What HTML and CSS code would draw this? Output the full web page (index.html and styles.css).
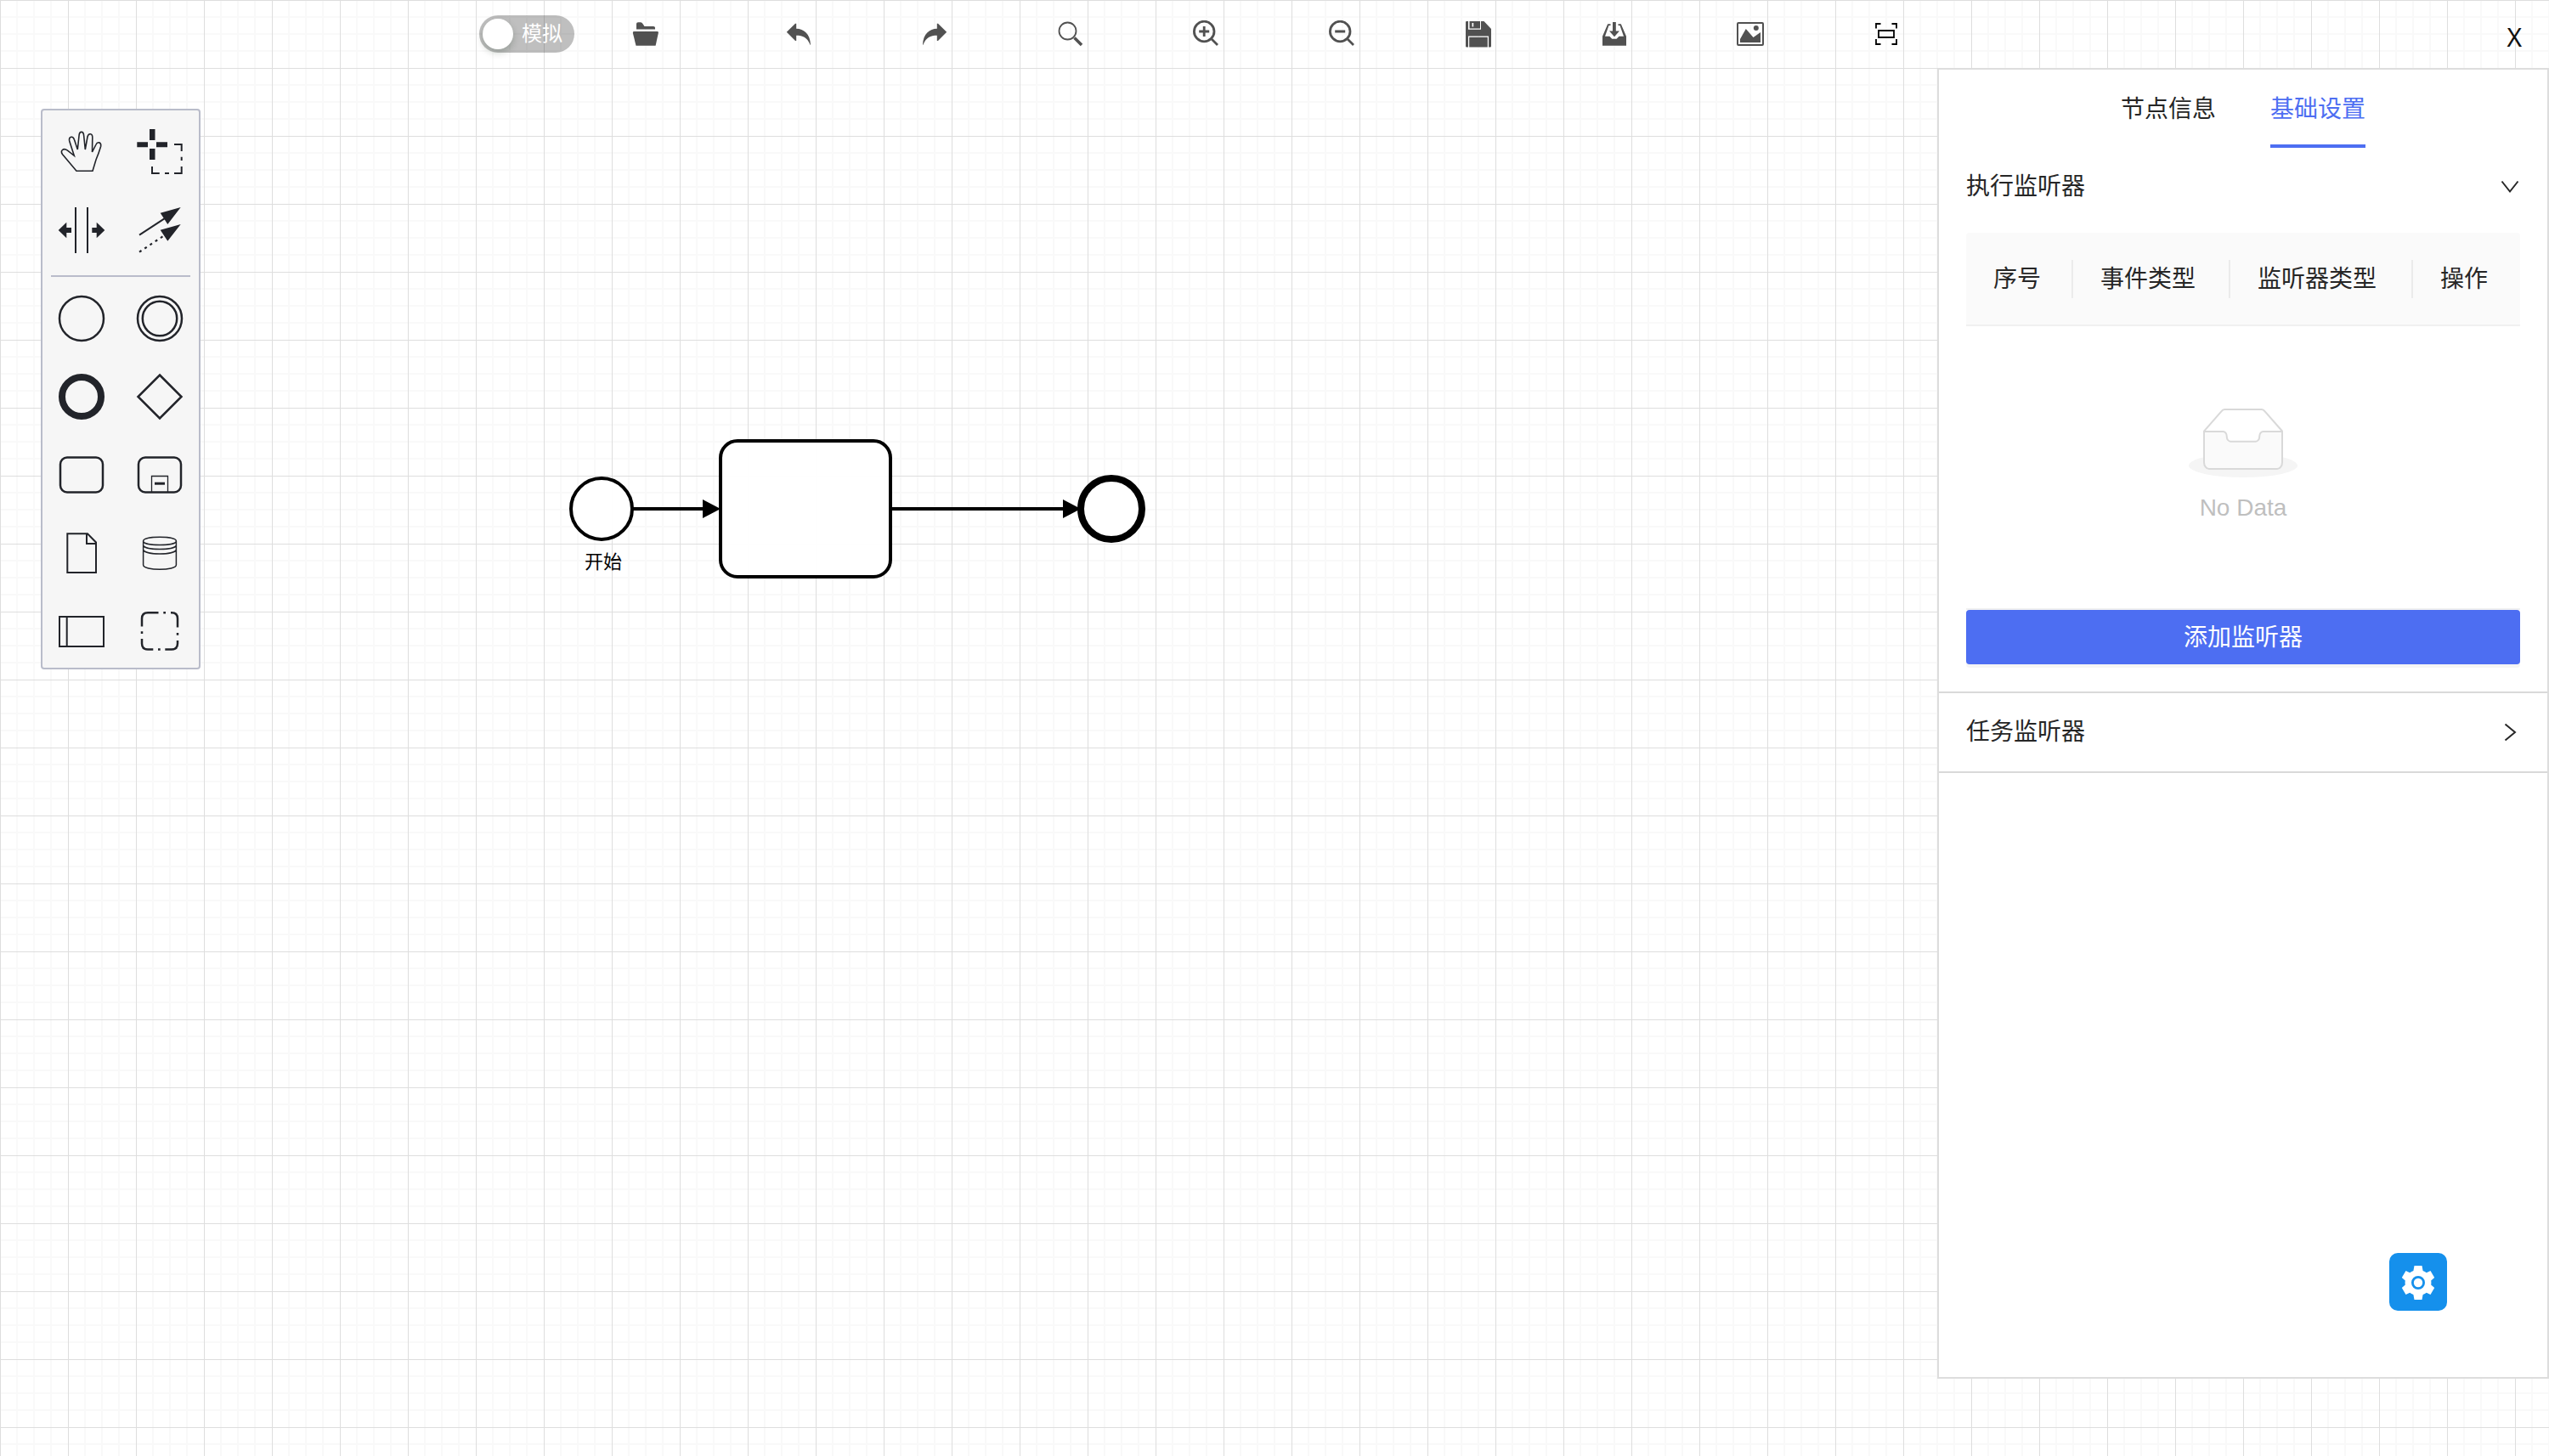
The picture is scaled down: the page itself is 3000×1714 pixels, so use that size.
FILE: index.html
```html
<!DOCTYPE html>
<html lang="zh-CN">
<head>
<meta charset="utf-8">
<title>流程设计器</title>
<link rel="stylesheet" href="styles.css">
</head>
<body>
<div class="designer">
  <svg class="diagram" role="img" aria-label="流程图">
    <g class="flow">
      <path d="M744 599H830M1050 599H1254"/>
      <path class="flow-head" d="M827 588L848 599L827 610ZM1251 588L1272 599L1251 610Z"/>
    </g>
    <circle class="node" cx="708" cy="599" r="36"/>
    <rect class="node" x="848" y="519" width="200" height="160" rx="20"/>
    <circle class="node node-end" cx="1308" cy="599" r="36"/>
    <text class="node-label" x="710" y="669">开始</text>
  </svg>

  <header class="toolbar">
    <label class="switch">
      <input class="switch-input" type="checkbox">
      <span class="switch-knob"></span>
      <span class="switch-text">模拟</span>
    </label>
    <div class="tools">
      <button class="tool tool-open" type="button" aria-label="打开"><svg viewBox="0 0 32 32"><path d="M5 10.500V4Q5 2.300 7 2.300H10Q11.500 2.300 12.500 4L14.500 7H25Q27 7 27 8.500V10.500Z"/><path d="M2.300 13H29.500Q31.200 13 30.800 15L27.600 29.700H4.500L.900 15Q.600 13 2.300 13Z"/></svg></button>
      <button class="tool" type="button" aria-label="撤销"><svg viewBox="0 0 32 32"><path d="M1.800 13.700L12 3.700H13.200V9.700C22 10 29.500 15.500 30 28.700H29.500C26 20 21 17.700 13.200 17.700V24H12Z"/></svg></button>
      <button class="tool" type="button" aria-label="重做"><svg viewBox="0 0 32 32"><path d="M30.200 13.700L20 3.700H18.800V9.700C10 10 2.500 15.500 2 28.700H2.500C6 20 11 17.700 18.800 17.700V24H20Z"/></svg></button>
      <button class="tool" type="button" aria-label="重置缩放"><svg viewBox="0 0 32 32"><circle class="line" cx="12.500" cy="12.500" r="10" stroke-width="1.800"/><path class="line" d="M20.500 20.500L29 29" stroke-width="3.500"/></svg></button>
      <button class="tool" type="button" aria-label="放大"><svg viewBox="0 0 32 32"><circle class="line" cx="13.200" cy="13" r="11.800" stroke-width="2.800"/><path class="line" d="M22 22L29 29M7.200 13H19.200M13.200 7V19" stroke-width="2.800"/></svg></button>
      <button class="tool" type="button" aria-label="缩小"><svg viewBox="0 0 32 32"><circle class="line" cx="13.200" cy="13" r="11.800" stroke-width="2.800"/><path class="line" d="M22 22L29 29M7.200 13H19.200" stroke-width="2.800"/></svg></button>
      <button class="tool" type="button" aria-label="保存"><svg viewBox="0 0 32 32"><path fill-rule="evenodd" d="M2 1H4V10.800H19V1H22.500L31 10V30.500Q31 31.500 30 31.500H28V18.500H4V31.500H2Q1 31.500 1 30.500V2Q1 1 2 1ZM5.500 1H18V9.500H5.500ZM8.500 3V7.500H10.200V3Z"/><path d="M5.200 19.800H26.800V31.500H5.200Z"/></svg></button>
      <button class="tool" type="button" aria-label="下载"><svg viewBox="0 0 32 32"><path d="M14 2H17.800V12.500H22L16 19.200L10 12.500H14Z"/><path d="M2 18.700L8.200 4.300H11.500V6H9.500L5 18.700H10.300L13.300 21.700H18.500L21.500 18.700H27L22.500 6H20.500V4.300H23.800L30 18.700V29.700H2Z"/></svg></button>
      <button class="tool" type="button" aria-label="导出图片"><svg viewBox="0 0 32 32"><rect class="line" x="1" y="3" width="30" height="26" rx="1" stroke-width="2"/><circle cx="22.800" cy="9" r="3"/><path d="M4 26V22L10.800 10L19.500 20L28 14V26Z"/></svg></button>
      <button class="tool tool-dark" type="button" aria-label="适应屏幕"><svg viewBox="0 0 32 32"><path class="line" d="M4 9.500V4H9.500M22.500 4H28V9.500M28 22V28H22.500M9.500 28H4V22M7 12H25V20H7Z" stroke-width="1.800"/></svg></button>
    </div>
    <button class="close" type="button" aria-label="关闭">X</button>
  </header>

  <nav class="palette" aria-label="工具面板">
    <div class="palette-group">
      <button class="entry" type="button" aria-label="抓手"><svg viewBox="0 0 60 60"><path stroke-width="1.600" d="M24 52.300L7.600 32.800C4.500 28.500 8.500 24.500 13.500 28.200L21.300 34.300L15.700 17C14.600 11.500 20 10.500 21.500 15.500L25.300 27L27 11C27.400 4.800 32.300 4.800 32.700 11L34.300 27L37 12C38 7.500 43 7.500 42.800 13L42.500 30L46.800 21.500C48.800 17 53.500 18.300 52.600 23.500Q50 32 47 39Q45.500 44 43 52.300Z"/></svg></button>
      <button class="entry" type="button" aria-label="框选"><svg viewBox="0 0 60 60"><path class="solid" d="M18 3H24.500V16H18ZM18 26H24.500V39H18ZM3.300 18.200H16V24.200H3.300ZM26 18.200H39V24.200H26Z"/><path d="M47 21H55.700V29M55.700 35.700V40M55.700 47V55H47M41 55H36M29.700 55H21V47" stroke-width="2"/></svg></button>
      <button class="entry" type="button" aria-label="间距调整"><svg viewBox="0 0 60 60"><path d="M23 3V57M37 3V57" stroke-width="2"/><path class="solid" d="M2.700 30L12.300 20.700V27H18V33H12.300V39.300ZM57.300 30L47.700 20.700V27H42.300V33H47.700V39.300Z"/></svg></button>
      <button class="entry" type="button" aria-label="连线"><svg viewBox="0 0 60 60"><path d="M6 35.700L37 15.300" stroke-width="2"/><path d="M6 55.700L37 35" stroke-width="2.200" stroke-dasharray="3 4.500"/><path class="solid" d="M54.700 3L30.700 9.700L39.300 23ZM54.700 23L30.700 29.700L39.300 42.700Z"/></svg></button>
    </div>
    <hr class="separator">
    <div class="palette-group">
      <button class="entry" type="button" aria-label="开始事件"><svg viewBox="0 0 60 60"><circle cx="30" cy="30" r="26"/></svg></button>
      <button class="entry" type="button" aria-label="中间事件"><svg viewBox="0 0 60 60"><circle cx="30" cy="30" r="26"/><circle cx="30" cy="30" r="20.200"/></svg></button>
      <button class="entry" type="button" aria-label="结束事件"><svg viewBox="0 0 60 60"><circle cx="30" cy="30" r="23" stroke-width="8"/></svg></button>
      <button class="entry" type="button" aria-label="网关"><svg viewBox="0 0 60 60"><path d="M30 4.500L55.500 30L30 55.500L4.500 30Z"/></svg></button>
      <button class="entry" type="button" aria-label="任务"><svg viewBox="0 0 60 60"><rect x="5" y="9.500" width="50" height="41" rx="8"/></svg></button>
      <button class="entry" type="button" aria-label="子流程"><svg viewBox="0 0 60 60"><rect x="5" y="9.500" width="50" height="41" rx="8"/><path d="M20.500 50V31.500H39.500V50" stroke-width="1.300"/><path d="M24 40.200H36" stroke-width="3"/></svg></button>
      <button class="entry" type="button" aria-label="数据对象"><svg viewBox="0 0 60 60"><path d="M13.300 7.300H37L47 17.500V53H13.300ZM36 7.300V19H47" stroke-width="2"/></svg></button>
      <button class="entry" type="button" aria-label="数据存储"><svg viewBox="0 0 60 60"><path stroke-width="1.500" d="M10.600 16C10.600 9.500 49.400 9.500 49.400 16C49.400 22 10.600 22 10.600 16V44C10.600 51 49.400 51 49.400 44V16M10.600 21C12 27 48 27 49.400 21M10.600 26C12 32.500 48 32.500 49.400 26"/></svg></button>
      <button class="entry" type="button" aria-label="泳池"><svg viewBox="0 0 60 60"><path d="M4 13H56V48H4ZM12.700 13V48" stroke-width="2"/></svg></button>
      <button class="entry" type="button" aria-label="分组"><svg viewBox="0 0 60 60"><path d="M9 24.500V15.300Q9 8.300 16 8.300H28.500M34.300 8.300H37M43 8.300H44Q51 8.300 51 15.300V25.500M51 32V34.700M51 41V44.500Q51 51.500 44 51.500H36.300M30.700 51.500H28M22.300 51.500H16Q9 51.500 9 44.500V39M9 33V30.300"/></svg></button>
    </div>
  </nav>

  <aside class="panel">
    <div class="tabs" role="tablist">
      <button class="tab" type="button" role="tab" aria-selected="false">节点信息</button>
      <button class="tab tab-active" type="button" role="tab" aria-selected="true">基础设置</button>
    </div>
    <section class="section">
      <button class="section-head" type="button" aria-expanded="true">
        <span>执行监听器</span>
        <svg class="arrow" viewBox="0 0 24 24"><path d="M2.500 5.500L12 17.500L21.500 5.500"/></svg>
      </button>
      <div class="section-body">
        <table class="table">
          <thead>
            <tr><th class="col-small">序号</th><th class="col-event">事件类型</th><th>监听器类型</th><th class="col-small">操作</th></tr>
          </thead>
          <tbody>
            <tr><td colspan="4">
              <div class="empty">
                <svg class="empty-image" viewBox="0 0 64 41"><g transform="translate(0 1)"><ellipse cx="32" cy="33" rx="32" ry="7" fill="#f5f5f5"/><g stroke="#d9d9d9" fill="none"><path d="M55 12.760L44.854 1.258C44.367.474 43.656 0 42.907 0H21.093c-.749 0-1.460.474-1.947 1.257L9 12.761V22h46v-9.240z"/><path d="M41.613 15.931c0-1.605.994-2.930 2.227-2.931H55v18.137C55 33.260 53.680 35 52.050 35h-40.100C10.320 35 9 33.259 9 31.137V13h11.160c1.233 0 2.227 1.323 2.227 2.928v.022c0 1.605 1.005 2.901 2.237 2.901h14.752c1.232 0 2.237-1.308 2.237-2.913v-.007z" fill="#fafafa"/></g></g></svg>
                <p class="empty-text">No Data</p>
              </div>
            </td></tr>
          </tbody>
        </table>
        <button class="add" type="button">添加监听器</button>
      </div>
    </section>
    <section class="section">
      <button class="section-head" type="button" aria-expanded="false">
        <span>任务监听器</span>
        <svg class="arrow" viewBox="0 0 24 24"><path d="M6.500 2.500L18 12L6.500 21.500"/></svg>
      </button>
    </section>
  </aside>

  <button class="settings" type="button" aria-label="设置"><svg viewBox="0 0 40 40"><path fill-rule="evenodd" d="M15.500 0H24.500L25.600 6Q28 7 29.800 8.200L34.500 6L39.200 14L35.200 17.500Q35.600 20 35.200 22.500L39.200 26L34.500 34L29.800 31.800Q28 33 25.600 34L24.500 40H15.500L14.400 34Q12 33 10.200 31.800L5.500 34L.800 26L4.800 22.500Q4.400 20 4.800 17.500L.800 14L5.500 6L10.200 8.200Q12 7 14.400 6ZM20 12A8 8 0 1 0 20 28A8 8 0 1 0 20 12Z"/><circle cx="20" cy="20" r="5.200"/></svg></button>
</div>
</body>
</html>
```
FILE: styles.css
```css
* {
  box-sizing: border-box;
}

body {
  margin: 0;
  font-family: "Liberation Sans", "Noto Sans CJK SC", sans-serif;
  font-size: 28px;
  line-height: 44px;
  color: #262626;
}

button {
  padding: 0;
  border: 0;
  background: none;
  font: inherit;
  color: inherit;
  cursor: pointer;
}

.designer {
  position: relative;
  display: grid;
  grid-template-columns: 1fr 24%;
  grid-template-rows: 80px 1fr;
  min-height: 100vh;
  background-color: #fff;
  background-image:
    linear-gradient(to right, #dedede 1px, transparent 1px),
    linear-gradient(#dedede 1px, transparent 1px),
    linear-gradient(to right, transparent 19px, #f9f9f9 19px, #f9f9f9 21px, transparent 21px, transparent 39px, #f9f9f9 39px, #f9f9f9 41px, transparent 41px, transparent 59px, #f9f9f9 59px, #f9f9f9 61px, transparent 61px),
    linear-gradient(transparent 19px, #f9f9f9 19px, #f9f9f9 21px, transparent 21px, transparent 39px, #f9f9f9 39px, #f9f9f9 41px, transparent 41px, transparent 59px, #f9f9f9 59px, #f9f9f9 61px, transparent 61px);
  background-size: 80px 80px;
}

/* Diagram on the free canvas */
.diagram {
  position: absolute;
  inset: 0;
  width: 100%;
  height: 100%;
}

.node {
  fill: #fff;
  fill-opacity: 0.95;
  stroke: #000;
  stroke-width: 4;
}

.node-end {
  stroke-width: 8;
}

.flow {
  fill: none;
  stroke: #000;
  stroke-width: 4;
}

.flow-head {
  fill: #000;
  stroke: none;
}

.node-label {
  font-size: 22px;
  text-anchor: middle;
  fill: #000;
}

/* Toolbar */
.toolbar {
  position: relative;
  grid-column: 1 / -1;
  display: flex;
  align-items: center;
  padding: 0 32px 0 564px;
}

.switch {
  display: flex;
  align-items: center;
  gap: 10px;
  width: 112px;
  height: 44px;
  padding: 4px;
  border-radius: 22px;
  background: rgba(0, 0, 0, 0.25);
  cursor: pointer;
}

.switch-input {
  position: absolute;
  opacity: 0;
}

.switch-knob {
  width: 36px;
  height: 36px;
  border-radius: 50%;
  background: #fff;
  box-shadow: 0 4px 8px rgba(0, 35, 11, 0.2);
}

.switch-text {
  font-size: 24px;
  color: #fff;
}

.tools {
  display: flex;
  gap: 128px;
  margin-left: 68px;
}

.tool {
  width: 32px;
  height: 32px;
  color: #515151;
}

.tool-open {
  margin-right: 20px;
}

.tool-dark {
  color: #000;
}

.tool svg {
  display: block;
  width: 32px;
  height: 32px;
  fill: currentColor;
}

.tool .line {
  fill: none;
  stroke: currentColor;
}

.close {
  margin-left: auto;
  padding-top: 8px;
  font-family: "Noto Sans", "Liberation Sans", sans-serif;
  font-size: 30px;
  color: #111;
}

/* Palette */
.palette {
  position: relative;
  align-self: start;
  width: 188px;
  margin: 48px;
  border: 2px solid #b9bcca;
  border-radius: 4px;
  background: #f6f6f6;
}

.palette-group {
  display: grid;
  grid-template-columns: 1fr 1fr;
}

.entry {
  display: flex;
  justify-content: center;
  height: 92px;
  padding-top: 19px;
}

.entry svg {
  width: 60px;
  height: 60px;
  fill: none;
  stroke: #22242a;
  stroke-width: 2.5;
}

.entry .solid {
  fill: #22242a;
  stroke: none;
}

.separator {
  height: 2px;
  margin: 10px 10px 0;
  border: 0;
  background: #b9bcca;
}

/* Property panel */
.panel {
  position: relative;
  grid-column: 2;
  margin-bottom: 91px;
  border: 2px solid #ddd;
  background: #fff;
}

.tabs {
  display: flex;
  justify-content: center;
  gap: 64px;
}

.tab {
  padding: 25px 0 19px;
  border-bottom: 4px solid transparent;
}

.tab-active {
  border-color: #4d6ef2;
  color: #4d6ef2;
}

.section {
  border-bottom: 2px solid #d9d9d9;
}

.section-head {
  display: flex;
  align-items: center;
  justify-content: space-between;
  width: 100%;
  padding: 24px 32px;
}

.arrow {
  width: 24px;
  height: 24px;
  fill: none;
  stroke: currentColor;
  stroke-width: 2;
}

.section-body {
  padding: 8px 32px 32px;
}

.table {
  width: 100%;
  border-collapse: separate;
  border-spacing: 0;
  table-layout: fixed;
}

.table th {
  position: relative;
  height: 110px;
  padding: 2px 0 0 32px;
  border-bottom: 2px solid #f0f0f0;
  background: #fafafa;
  font-weight: 400;
  text-align: left;
  white-space: nowrap;
}

.table th:first-child {
  border-top-left-radius: 4px;
}

.table th:last-child {
  border-top-right-radius: 4px;
}

.table th:not(:last-child)::after {
  content: "";
  position: absolute;
  top: 32px;
  right: 0;
  width: 2px;
  height: 45px;
  background: #ebebeb;
}

.col-small {
  width: 126px;
}

.col-event {
  width: 185px;
}

.table td {
  height: 334px;
  padding: 0;
  border-bottom: 2px solid #f0f0f0;
}

.empty {
  display: flex;
  flex-direction: column;
  align-items: center;
  gap: 14px;
}

.empty-image {
  width: 128px;
  height: 82px;
}

.empty-text {
  margin: 0;
  color: #bfbfbf;
}

.add {
  display: block;
  width: 100%;
  height: 64px;
  padding-top: 2px;
  border-radius: 4px;
  background: #4d6ef2;
  box-shadow: 0 4px 0 rgba(0, 0, 0, 0.04);
  color: #fff;
}

/* Floating settings button */
.settings {
  position: absolute;
  right: 120px;
  bottom: 171px;
  width: 68px;
  height: 68px;
  border-radius: 10px;
  background: #1590ec;
}

.settings svg {
  display: block;
  width: 40px;
  height: 40px;
  margin: 2px auto 0;
  fill: #fff;
}
```
